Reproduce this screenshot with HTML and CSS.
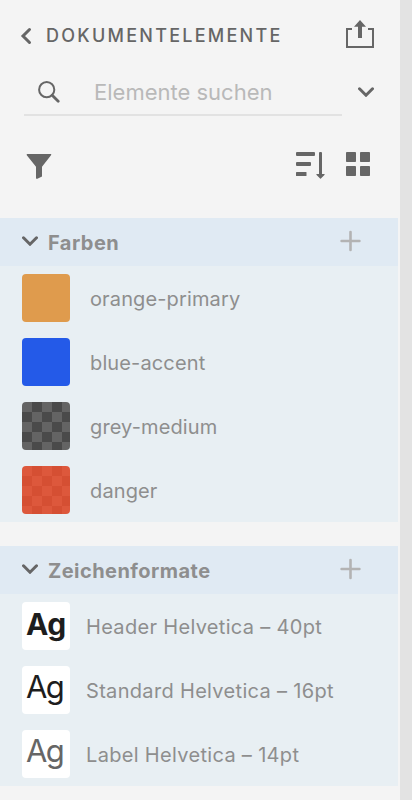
FILE: index.html
```html
<!DOCTYPE html>
<html lang="de">
<head>
    <meta charset="UTF-8">
    <meta name="viewport" content="width=device-width, initial-scale=1.0">
    <title>Dokumentelemente</title>
    <link rel="stylesheet" href="styles.css">
</head>
<body>
    <div class="panel">
        <!-- Header -->
        <header class="header">
            <button class="icon-btn back-btn" aria-label="Zurück">
                <svg width="12" height="18" viewBox="0 0 12 18"><path d="M9.5 2.5 3 9l6.5 6.5" class="stroke"/></svg>
            </button>
            <h1>DOKUMENTELEMENTE</h1>
            <button class="icon-btn share-btn" aria-label="Teilen">
                <svg width="28" height="28" viewBox="0 0 28 28">
                    <path d="M6 9H1v18h26V9h-5" fill="none" stroke="#666" stroke-width="2"/>
                    <path d="M14 0l6 6.7h-4V18h-4V6.7H8z" fill="#666"/>
                </svg>
            </button>
        </header>

        <!-- Search -->
        <div class="search">
            <label class="search-field">
                <svg width="22" height="22" viewBox="0 0 22 22">
                    <circle cx="8.7" cy="8.7" r="7.6" fill="none" stroke="#666" stroke-width="2"/>
                    <path d="M14.2 14.2l6 6" fill="none" stroke="#666" stroke-width="2.8" stroke-linecap="round"/>
                </svg>
                <input type="text" placeholder="Elemente suchen">
            </label>
            <button class="icon-btn scope-btn" aria-label="Suchbereich">
                <svg width="16" height="10" viewBox="0 0 16 10"><path d="M1.5 1.8 8 8.2l6.5-6.4" class="stroke"/></svg>
            </button>
        </div>

        <!-- Toolbar -->
        <div class="toolbar">
            <button class="icon-btn filter-btn" aria-label="Filtern">
                <svg width="26" height="26" viewBox="0 0 26 26"><path d="M1 0h24q.6.5 0 1.2L16 12.8v9.6l-4.6 2.3q-1.4.5-1.4-.8V12.8L.8 1.2Q.4.5 1 0z" fill="#666"/></svg>
            </button>
            <button class="icon-btn sort-btn" aria-label="Sortieren">
                <svg width="30" height="28" viewBox="0 0 30 28" fill="#666">
                    <rect x="0" y="0" width="19" height="4" rx="1"/>
                    <rect x="0" y="10" width="15" height="4" rx="1"/>
                    <rect x="0" y="20" width="10.5" height="4" rx=".6"/>
                    <path d="M23 1q0-1 1-1h1q1 0 1 1v21h2.4q.6.3 0 .9l-3.5 3.7q-.4.4-.8 0l-3.5-3.7q-.6-.6 0-.9H23z"/>
                </svg>
            </button>
            <button class="icon-btn" aria-label="Rasteransicht">
                <svg width="24" height="24" viewBox="0 0 24 24" fill="#666">
                    <rect x="0" y="0" width="10" height="10" rx=".8"/>
                    <rect x="14" y="0" width="10" height="10" rx=".8"/>
                    <rect x="0" y="14" width="10" height="10" rx=".8"/>
                    <rect x="14" y="14" width="10" height="10" rx=".8"/>
                </svg>
            </button>
        </div>

        <!-- Colors -->
        <section class="section">
            <div class="section-header">
                <svg width="16" height="10" viewBox="0 0 16 10"><path d="M1.5 1.8 8 8.2l6.5-6.4" class="stroke"/></svg>
                <h2>Farben</h2>
                <button class="icon-btn" aria-label="Farbe hinzufügen">
                    <svg width="22" height="22" viewBox="0 0 22 22"><path d="M2.6 11h17.8M11.5 2.1v17.8" class="plus"/></svg>
                </button>
            </div>
            <ul class="colors">
                <li><span class="swatch orange"></span><span class="name">orange-primary</span></li>
                <li><span class="swatch blue"></span><span class="name">blue-accent</span></li>
                <li><span class="swatch grey"></span><span class="name">grey-medium</span></li>
                <li><span class="swatch danger"></span><span class="name">danger</span></li>
            </ul>
        </section>

        <!-- Character styles -->
        <section class="section">
            <div class="section-header">
                <svg width="16" height="10" viewBox="0 0 16 10"><path d="M1.5 1.8 8 8.2l6.5-6.4" class="stroke"/></svg>
                <h2>Zeichenformate</h2>
                <button class="icon-btn" aria-label="Zeichenformat hinzufügen">
                    <svg width="22" height="22" viewBox="0 0 22 22"><path d="M2.6 11h17.8M11.5 2.1v17.8" class="plus"/></svg>
                </button>
            </div>
            <ul class="formats">
                <li><span class="swatch sample bold">Ag</span><span class="name">Header Helvetica – 40pt</span></li>
                <li><span class="swatch sample">Ag</span><span class="name">Standard Helvetica – 16pt</span></li>
                <li><span class="swatch sample light">Ag</span><span class="name">Label Helvetica – 14pt</span></li>
            </ul>
        </section>
    </div>
</body>
</html>
```
FILE: styles.css
```css
:root {
    --bg: #f4f4f4;
    --icon: #666;
    --text: #8e8e8e;
    --section-header: #e0eaf3;
    --section-body: #e8eff3;
}

* {
    margin: 0;
    padding: 0;
    box-sizing: border-box;
    font-family: Inter, 'Liberation Sans', sans-serif;
}

body {
    background-color: #e3e3e3;
    color: var(--text);
}

svg {
    display: block;
}

.stroke {
    fill: none;
    stroke: var(--icon);
    stroke-width: 3;
    stroke-linecap: round;
}

.plus {
    fill: none;
    stroke: #b3b3b3;
    stroke-width: 2.6;
    stroke-linecap: round;
}

.icon-btn {
    background: none;
    border: none;
    cursor: pointer;
}

.panel {
    width: 400px;
    height: 800px;
    padding-right: 2px;
    background: var(--bg);
    overflow: hidden;
}

/* Header */
.header {
    display: flex;
    align-items: center;
    height: 72px;
    padding: 0 24px 0 20px;
}

.header h1 {
    margin: -2px 0 0 14px;
    color: var(--icon);
    font-size: 18px;
    font-weight: 500;
    letter-spacing: 2.25px;
}

.share-btn {
    margin: -4px 0 0 auto;
}

/* Search */
.search {
    display: flex;
    align-items: center;
    gap: 16px;
    height: 44px;
    padding-left: 24px;
}

.search-field {
    display: flex;
    align-items: center;
    width: 318px;
    height: 44px;
    padding: 0 0 2px 14px;
    border-bottom: 2px solid #e2e2e2;
}

.search-field input {
    width: 240px;
    margin-left: 34px;
    border: none;
    outline: none;
    background: none;
    font-size: 22px;
}

.search-field input::placeholder {
    color: #b9b9b9;
}

.scope-btn {
    margin-top: -4px;
}

/* Toolbar */
.toolbar {
    display: flex;
    align-items: flex-start;
    height: 102px;
    padding: 36px 28px 0 26px;
}

.filter-btn {
    margin-top: 2px;
}

.sort-btn {
    margin: 0 20px 0 auto;
}

/* Sections */
.section {
    margin-bottom: 24px;
    background: var(--section-body);
}

.section-header {
    display: flex;
    align-items: center;
    height: 48px;
    padding: 0 37px 2px 22px;
    background: var(--section-header);
}

.section-header h2 {
    margin: 4px auto 0 10px;
    font-size: 20px;
    font-weight: 700;
    letter-spacing: 0.45px;
}

.section ul {
    display: flex;
    flex-direction: column;
    gap: 16px;
    padding: 8px 22px;
    list-style: none;
}

.section li {
    display: flex;
    align-items: center;
    gap: 20px;
    height: 48px;
    font-size: 20px;
    letter-spacing: 0.13px;
}

.section .formats li {
    gap: 16px;
    letter-spacing: 0.32px;
}

.name {
    padding-top: 2px;
}

.swatch {
    flex: none;
    width: 48px;
    height: 48px;
    border-radius: 4px;
}

.orange {
    background: #df9b4d;
}

.blue {
    background: #245ae8;
}

.grey {
    background: repeating-conic-gradient(#4a4a4a 0 25%, #646464 0 50%) 0 0 / 20px 20px;
}

.danger {
    background: repeating-conic-gradient(#d54f33 0 25%, #dd583c 0 50%) 0 0 / 20px 20px;
}

.sample {
    padding-left: 4px;
    background: #fff;
    color: #1d1d1d;
    font-size: 31px;
    line-height: 42px;
    letter-spacing: -1.6px;
}

.sample.bold {
    font-size: 30px;
    font-weight: 700;
    line-height: 44px;
    letter-spacing: -0.5px;
}

.sample.light {
    color: var(--icon);
}
```
